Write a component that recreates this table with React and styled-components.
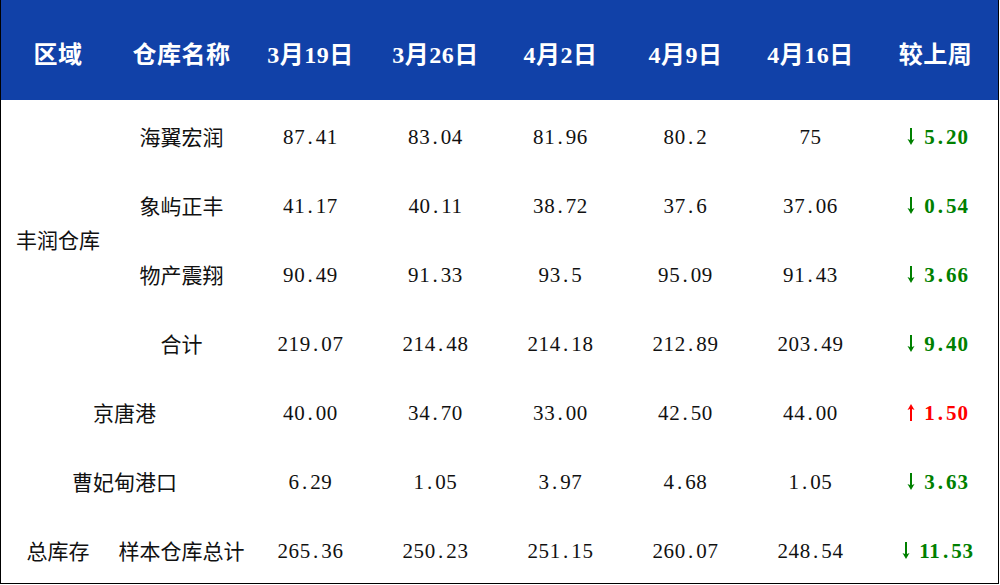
import React from 'react';
import styled, { createGlobalStyle } from 'styled-components';

const GlobalStyle = createGlobalStyle`
    html, body {
        margin: 0;
        padding: 0;
        background: #ffffff;
    }
    body {
        font-family: "Liberation Serif", "Noto Sans CJK SC", serif;
    }
`;

const header = ['区域', '仓库名称', '3月19日', '3月26日', '4月2日', '4月9日', '4月16日', '较上周'];

const rows = [
    { group: '丰润仓库', groupSpan: 4, name: '海翼宏润', values: ['87.41', '83.04', '81.96', '80.2', '75'], delta: '5.20', up: false },
    { name: '象屿正丰', values: ['41.17', '40.11', '38.72', '37.6', '37.06'], delta: '0.54', up: false },
    { name: '物产震翔', values: ['90.49', '91.33', '93.5', '95.09', '91.43'], delta: '3.66', up: false },
    { name: '合计', values: ['219.07', '214.48', '214.18', '212.89', '203.49'], delta: '9.40', up: false },
    { wide: '京唐港', values: ['40.00', '34.70', '33.00', '42.50', '44.00'], delta: '1.50', up: true },
    { wide: '曹妃甸港口', values: ['6.29', '1.05', '3.97', '4.68', '1.05'], delta: '3.63', up: false },
    { group: '总库存', groupSpan: 1, name: '样本仓库总计', values: ['265.36', '250.23', '251.15', '260.07', '248.54'], delta: '11.53', up: false },
];

const Num = ({ text }) => {
    const [a, b] = text.split('.');
    return (
        <span>
            {a}
            {b !== undefined && <Dot>.</Dot>}
            {b}
        </span>
    );
};

const Arrow = ({ up }) => (
    <svg width="8" height="17" viewBox="0 0 8 17">
        {up ? (
            <>
                <rect x="3" y="4" width="2" height="13" fill="currentColor" />
                <path d="M4 0 L7.5 6 L5 5 L5 6 L3 6 L3 5 L0.5 6 Z" fill="currentColor" />
            </>
        ) : (
            <>
                <rect x="3" y="0" width="2" height="13" fill="currentColor" />
                <path d="M4 17 L7.5 11 L5 12 L5 11 L3 11 L3 12 L0.5 11 Z" fill="currentColor" />
            </>
        )}
    </svg>
);

const App = () => {
    return (
        <>
            <GlobalStyle />
            <Table>
                {header.map(h => (
                    <HeadCell key={h}>{h}</HeadCell>
                ))}
                {rows.map((r, i) => (
                    <React.Fragment key={i}>
                        {r.group && <Cell $rowSpan={r.groupSpan}>{r.group}</Cell>}
                        {r.name && <Cell>{r.name}</Cell>}
                        {r.wide && <Cell $colSpan={2}>{r.wide}</Cell>}
                        {r.values.map((v, j) => (
                            <NumCell key={j}><Num text={v} /></NumCell>
                        ))}
                        <DeltaCell $up={r.up}>
                            <Arrow up={r.up} />
                            <Num text={r.delta} />
                        </DeltaCell>
                    </React.Fragment>
                ))}
            </Table>
        </>
    );
};

const Table = styled.div`
    display: grid;
    grid-template-columns: 114px 133px repeat(6, 125px);
    grid-template-rows: 100px repeat(7, 69px);
    width: 999px;
    box-sizing: border-box;
    border: 1px solid #000;
    border-top: none;
    background: #fff;
`;

const HeadCell = styled.div`
    display: flex;
    align-items: center;
    justify-content: center;
    padding-top: 4px;
    background: #1141a8;
    color: #fff;
    font-size: 24px;
    font-weight: bold;
    letter-spacing: 0.5px;
`;

const Cell = styled.div`
    display: flex;
    align-items: center;
    justify-content: center;
    padding-top: 2px;
    font-family: "Noto Sans CJK SC", sans-serif;
    font-size: 21px;
    color: #111;
    grid-row: ${p => (p.$rowSpan ? `span ${p.$rowSpan}` : 'auto')};
    grid-column: ${p => (p.$colSpan ? `span ${p.$colSpan}` : 'auto')};
`;

const NumCell = styled.div`
    display: flex;
    align-items: center;
    justify-content: center;
    padding-top: 5px;
    font-size: 21px;
    letter-spacing: 0.6px;
    color: #111;
`;

const DeltaCell = styled(NumCell)`
    gap: 9px;
    padding-left: 5px;
    font-weight: bold;
    letter-spacing: 0.8px;
    color: ${p => (p.$up ? '#ff0000' : '#008000')};
    svg {
        margin-top: -2px;
    }
`;

const Dot = styled.span`
    display: inline-block;
    width: 0.5em;
    text-align: center;
`;

export default App;
